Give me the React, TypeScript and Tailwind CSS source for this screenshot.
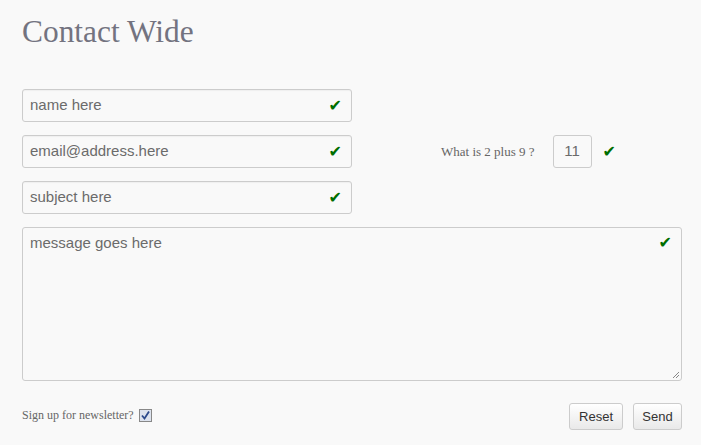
import React from "react";

const Check = ({ className = "" }: { className?: string }) => (
  <span className={"text-[#006e00] text-[16px] leading-none font-['DejaVu_Sans',sans-serif] " + className}>✔</span>
);

function Field({ text }: { text: string }) {
  return (
    <div className="w-[330px] h-[33px] border border-[#cccccc] rounded-[3px] bg-[#f9f9f9] flex items-center justify-between pl-[7px] pr-[9px] shadow-[inset_0_1px_1px_rgba(0,0,0,0.04)]">
      <span className="text-[15px] text-[#6b6b6b] font-['Liberation_Sans',Arial,sans-serif]">{text}</span>
      <Check />
    </div>
  );
}

export default function App() {
  return (
    <div className="w-[701px] h-[445px] bg-[#f9f9f9] pl-[22px] pr-[19px] pt-[14px] font-['Liberation_Serif',serif]">
      <h1 className="text-[31.4px] leading-[36px] text-[#737380] font-['Liberation_Serif',serif] h-[75px]">Contact Wide</h1>
      <div className="flex">
        <div className="flex flex-col gap-[13px]">
          <Field text="name here" />
          <Field text="email@address.here" />
          <Field text="subject here" />
        </div>
        <div className="flex items-center h-[33px] mt-[46px] ml-[89px]">
          <span className="text-[13px] text-[#666] font-['Liberation_Serif',serif]">What is 2 plus 9 ?</span>
          <div className="ml-[18px] w-[39px] h-[33px] border border-[#cccccc] rounded-[3px] flex items-center justify-center text-[15px] text-[#6b6b6b] font-['Liberation_Sans',Arial,sans-serif]">11</div>
          <Check className="ml-[11px]" />
        </div>
      </div>
      <div className="relative mt-[13px] w-[660px] h-[154px] border border-[#cccccc] rounded-[3px] flex justify-between items-start pl-[7px] pr-[9px] pt-[4px]">
        <span className="text-[15px] text-[#6b6b6b] font-['Liberation_Sans',Arial,sans-serif]">message goes here</span>
        <Check className="mt-[3px]" />
        <svg className="absolute right-[1px] bottom-[1px]" width="8" height="8" viewBox="0 0 8 8">
          <path d="M7 1 L1 7 M7 4 L4 7" stroke="#888" strokeWidth="1" />
        </svg>
      </div>
      <div className="flex items-start justify-between mt-[22px]">
        <div className="flex items-center mt-[3px]">
          <span className="text-[12px] text-[#666] font-['Liberation_Serif',serif]">Sign up for newsletter?</span>
          <span className="ml-[5px] w-[13px] h-[13px] border border-[#888] bg-[#dde3ee] flex items-center justify-center">
            <svg width="11" height="11" viewBox="0 0 11 11">
              <path d="M2 5.5 L4.5 8.5 L9 1.5" stroke="#2c4a8c" strokeWidth="1.8" fill="none" />
            </svg>
          </span>
        </div>
        <div className="flex gap-[10px]">
          <button className="h-[27px] px-[9px] border border-[#cccccc] rounded-[3px] bg-gradient-to-b from-[#ffffff] to-[#e9e9e9] text-[13px] text-[#333] font-['Liberation_Sans',Arial,sans-serif]">Reset</button>
          <button className="h-[27px] w-[49px] border border-[#cccccc] rounded-[3px] bg-gradient-to-b from-[#ffffff] to-[#e9e9e9] text-[13px] text-[#333] font-['Liberation_Sans',Arial,sans-serif]">Send</button>
        </div>
      </div>
    </div>
  );
}
